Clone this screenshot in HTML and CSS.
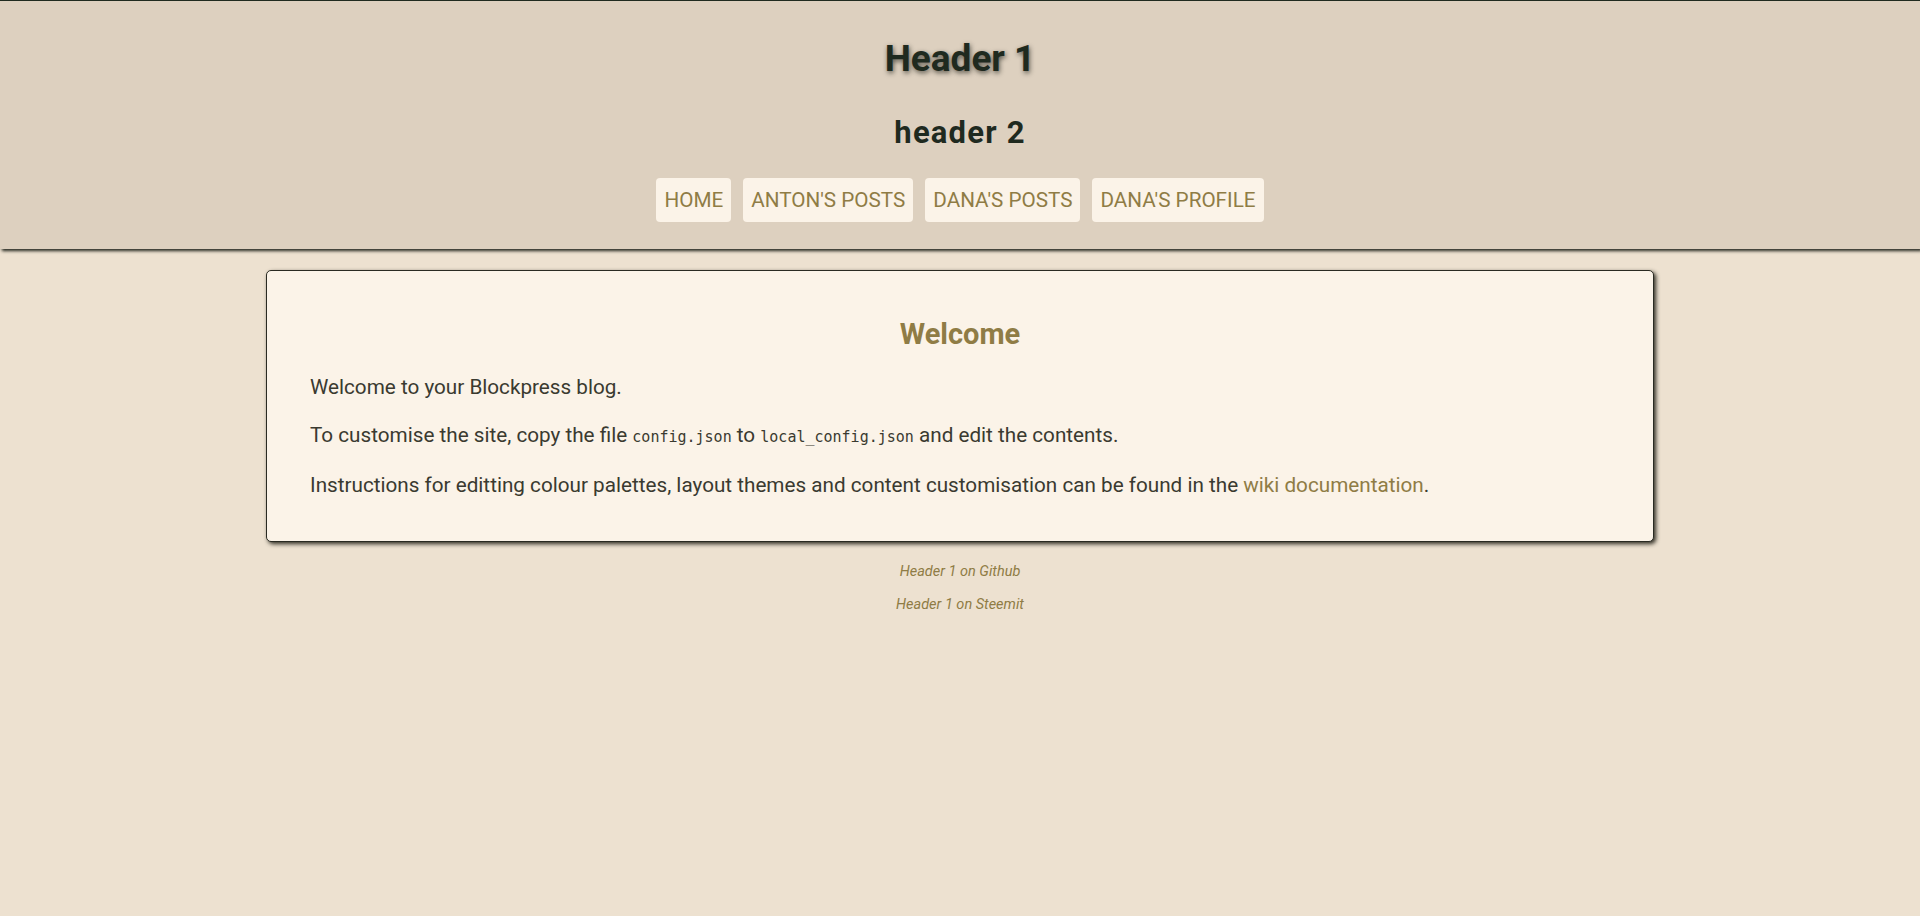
FILE: index.html
```html
<!DOCTYPE html>
<html lang="en">
<head>
<meta charset="utf-8">
<title>Header 1</title>
<link rel="stylesheet" href="styles.css">
</head>
<body>
<header class="site-header">
  <h1 class="site-title">Header 1</h1>
  <h2 class="site-subtitle">header 2</h2>
  <nav class="nav">
    <a class="nav-link" href="#">Home</a>
    <a class="nav-link" href="#">Anton's Posts</a>
    <a class="nav-link" href="#">Dana's Posts</a>
    <a class="nav-link" href="#">Dana's Profile</a>
  </nav>
</header>
<main class="content">
  <section class="card">
    <h2 class="card-title">Welcome</h2>
    <p class="para">Welcome to your Blockpress blog.</p>
    <p class="para">To customise the site, copy the file <code class="code">config.json</code> to <code class="code">local_config.json</code> and edit the contents.</p>
    <p class="para">Instructions for editting colour palettes, layout themes and content customisation can be found in the <a class="link" href="#">wiki documentation</a>.</p>
  </section>
</main>
<footer class="footer">
  <a class="footer-link" href="#">Header 1 on Github</a>
  <a class="footer-link" href="#">Header 1 on Steemit</a>
</footer>
</body>
</html>
```
FILE: styles.css
```css
html, body {
  margin: 0;
  padding: 0;
}
body {
  background: #ede1d0;
  font-family: Roboto, "Liberation Sans", sans-serif;
  color: #3a3a30;
  min-height: 916px;
}
.site-header {
  background: #ddd0bf;
  border-top: 1px solid #1f2a1f;
  padding: 37px 0 27px;
  text-align: center;
  box-shadow: 2px 2px 3px #23261e;
  position: relative;
}
.site-title {
  margin: 0;
  font-size: 37px;
  font-weight: 700;
  line-height: 42px;
  color: #1f2a1f;
  text-shadow: 1px 2px 5px rgba(20, 22, 15, 0.65);
}
.site-subtitle {
  margin: 35px 0 0;
  font-size: 31px;
  font-weight: 700;
  letter-spacing: 1.2px;
  line-height: 36px;
  color: #1f2a1f;
}
.nav {
  margin-top: 27px;
  display: flex;
  justify-content: center;
  gap: 12px;
}
.nav-link {
  display: block;
  background: #fbf3e8;
  color: #8f7c45;
  text-decoration: none;
  text-transform: uppercase;
  font-size: 20.7px;
  line-height: 28px;
  padding: 8px 8px;
  border-radius: 4px;
}
.content {
  padding-top: 21px;
  display: flex;
  justify-content: center;
}
.card {
  width: 1388px;
  box-sizing: border-box;
  background: #fbf3e8;
  border: 1px solid #2a2a22;
  border-radius: 5px;
  padding: 46px 43px 42px;
  box-shadow: 2px 2px 4px #2e2c22;
}
.card-title {
  margin: 0 0 22px;
  text-align: center;
  font-size: 29px;
  font-weight: 700;
  line-height: 34px;
  color: #8f7c45;
}
.para {
  margin: 0 0 20px;
  font-size: 20.7px;
  line-height: 28px;
  color: #3a3a30;
}
.para:last-child {
  margin-bottom: 0;
}
.code {
  font-family: "DejaVu Sans Mono", "Liberation Mono", monospace;
  font-size: 15px;
}
.link {
  color: #8f7c45;
  text-decoration: none;
}
.footer {
  padding-top: 19px;
  display: flex;
  flex-direction: column;
  align-items: center;
  gap: 11px;
}
.footer-link {
  font-size: 14.5px;
  line-height: 22px;
  font-style: italic;
  color: #8f7c45;
  text-decoration: none;
}
```
